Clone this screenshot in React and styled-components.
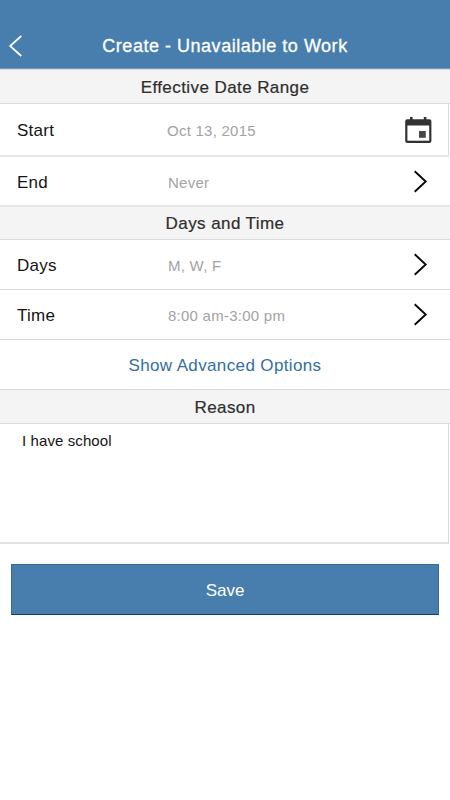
import styled, { createGlobalStyle } from 'styled-components';

const GlobalStyle = createGlobalStyle`
  * {
    box-sizing: border-box;
  }

  body {
    margin: 0;
    background: #fff;
    font-family: "Liberation Sans", Arial, sans-serif;
  }
`;

const Chevron = () => <svg width="14" height="23" viewBox="0 0 14 23" fill="none">
    <path d="M0.7 1.2 L11.7 11.5 L0.7 21.8" stroke="#0a0a0a" strokeWidth="1.9"/>
</svg>

const BackArrow = () => <svg width="14" height="22" viewBox="0 0 14 22" fill="none">
    <path d="M13.3 1 L2.1 11 L13.3 21" stroke="#fff" strokeWidth="1.7"/>
</svg>

const Calendar = () => <svg width="28" height="28" viewBox="0 0 28 28">
    <path fill="#323234" d="M6 1h2.6v2.2h11.2V1h2.6v2.2h3a2 2 0 0 1 2 2v19.800a2 2 0 0 1-2 2H3.200a2 2 0 0 1-2-2V5.200a2 2 0 0 1 2-2H6z"/>
    <path fill="#fff" d="M3.400 9.500h21.800v15.200H3.400z"/>
    <path fill="#48484a" d="M15 15h6.800v6.800H15z"/>
</svg>

const Field = ({label, value, children, ...rest}) => <Row {...rest}>
    <Label>{label}</Label>
    <Value>{value}</Value>
    {children}
</Row>

export default () => <Screen>
    <GlobalStyle/>
    <Header>
        <BackButton aria-label="Back"><BackArrow/></BackButton>
        <Title>Create - Unavailable to Work</Title>
    </Header>
    <SectionTitle>Effective Date Range</SectionTitle>
    <DateRow>
        <Label>Start</Label>
        <StartValue>Oct 13, 2015</StartValue>
        <Calendar/>
    </DateRow>
    <Field label="End" value="Never" $thick><Chevron/></Field>
    <SectionTitle $short>Days and Time</SectionTitle>
    <Field label="Days" value="M, W, F"><Chevron/></Field>
    <Field label="Time" value="8:00 am-3:00 pm"><Chevron/></Field>
    <AdvancedLink>Show Advanced Options</AdvancedLink>
    <SectionTitle>Reason</SectionTitle>
    <Reason defaultValue="I have school"/>
    <SaveButton>Save</SaveButton>
</Screen>

const Screen = styled.div`
  display: flex;
  flex-direction: column;
  width: 450px;
  height: 800px;
  background: #fff;
`;

const Header = styled.header`
  display: flex;
  align-items: center;
  height: 70px;
  padding: 23px 8px 0;
  background: #487eae;
  border-bottom: 1px solid #d3dbe3;
  box-shadow: inset 0 -1px 0 #7f97ae;
`;

const BackButton = styled.button`
  display: flex;
  width: 14px;
  padding: 0;
  border: 0;
  background: none;
`;

const Title = styled.h1`
  flex: 1;
  margin: 0 14px 0 0;
  color: #fff;
  font-size: 18px;
  font-weight: normal;
  line-height: 22px;
  letter-spacing: 0.52px;
  text-align: center;
  -webkit-text-stroke: 0.3px #fff;
`;

const SectionTitle = styled.h2`
  height: ${({$short}) => $short ? 33 : 34}px;
  margin: 0;
  background: #f4f4f4;
  border-bottom: 1px solid #d9d9d9;
  color: #2e2e2e;
  font-size: 17px;
  font-weight: normal;
  line-height: ${({$short}) => $short ? 33 : 35}px;
  letter-spacing: 0.42px;
  text-align: center;
  -webkit-text-stroke: 0.2px #2e2e2e;
`;

const Row = styled.div`
  display: flex;
  align-items: center;
  height: 50px;
  padding: 0 22px 0 17px;
  border-bottom: ${({$thick}) => $thick ? '2px solid #e6e6e6' : '1px solid #d9d9d9'};
`;

const Label = styled.span`
  width: 151px;
  padding-top: 3px;
  color: #141414;
  font-size: 17px;
  letter-spacing: 0.25px;
`;

const Value = styled.span`
  flex: 1;
  padding-top: 2px;
  color: #a3a3a3;
  font-size: 15px;
  letter-spacing: 0.25px;
`;

const DateRow = styled(Row)`
  height: 53px;
  margin-right: 1px;
  padding-right: 16px;
  border-right: 1px solid #dcdcdc;
  border-bottom: 2px solid #e6e6e6;
`;

const StartValue = styled(Value)`
  margin-left: -1px;
`;

const AdvancedLink = styled.button`
  height: 50px;
  padding: 2px 0 0;
  border: 0;
  border-bottom: 1px solid #d9d9d9;
  background: none;
  color: #336f9f;
  font-family: inherit;
  font-size: 17px;
  letter-spacing: 0.37px;
`;

const Reason = styled.textarea`
  height: 120px;
  margin: 0 1px 0 0;
  padding: 8px 22px;
  border: 0;
  border-right: 1px solid #d9d9d9;
  border-bottom: 2px solid #e4e4e4;
  outline: none;
  resize: none;
  color: #141414;
  font-family: inherit;
  font-size: 15px;
  line-height: 18px;
  letter-spacing: 0.1px;
`;

const SaveButton = styled.button`
  height: 51px;
  margin: 20px 11px 0;
  padding: 2px 0 0;
  border: 1px solid #376b95;
  border-bottom-color: #193d61;
  background: #487eae;
  color: #fff;
  font-family: inherit;
  font-size: 17px;
`;
